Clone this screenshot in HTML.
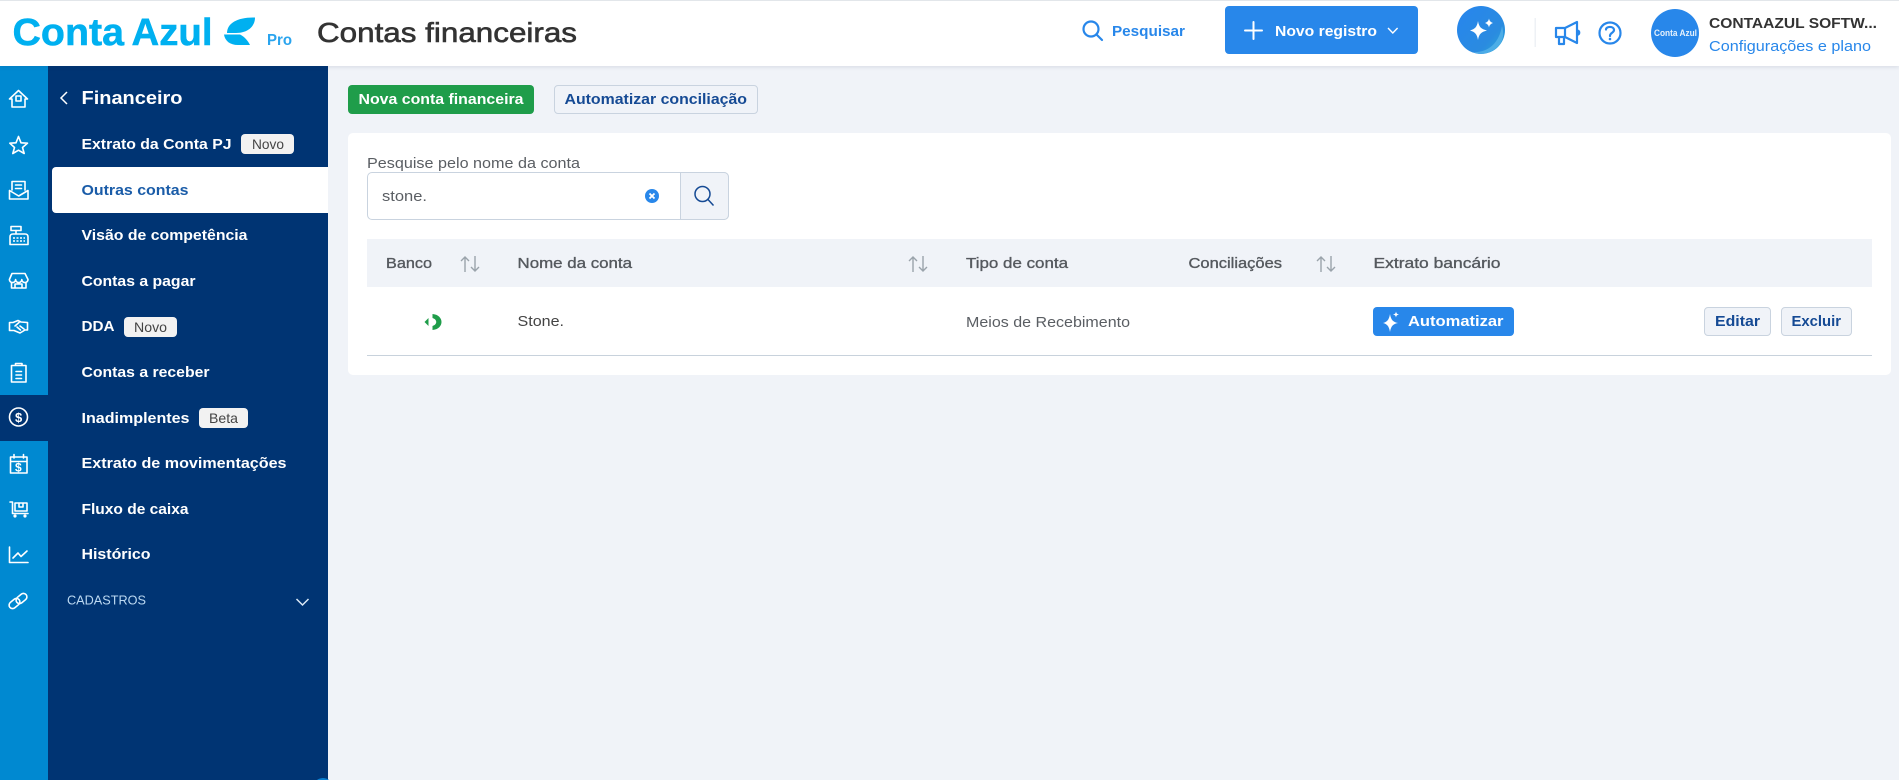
<!DOCTYPE html>
<html lang="pt-BR">
<head>
<meta charset="utf-8">
<title>Contas financeiras</title>
<style>
html,body{margin:0;padding:0;width:1899px;height:780px;overflow:hidden;background:#f0f3f8}
#p{position:relative;width:1899px;height:780px;overflow:hidden;background:#f0f3f8}
.b{position:absolute;box-sizing:border-box}
svg.o{position:absolute;left:0;top:0;width:1899px;height:780px}
text{font-family:"Liberation Sans",sans-serif;font-size:15px}
.m{font-weight:700;fill:#fff;font-size:15px}
.u{fill:#5a5e63;font-size:15px}
.h{fill:#55595e;font-size:15px;stroke:#55595e;stroke-width:.35}
.r{fill:none;stroke:#fff;stroke-width:1.6;stroke-linejoin:round;stroke-linecap:round}
.s{fill:none;stroke:#2887ea;stroke-width:2.2;stroke-linejoin:round;stroke-linecap:round}
.a{fill:none;stroke:#9aa3ab;stroke-width:1.4}
</style>
</head>
<body>
<div id="p">
<div class="b" style="left:0;top:0;width:1899px;height:66px;background:#fff;border-top:1px solid #e2e6ea;box-shadow:0 1px 4px rgba(30,50,80,.12);z-index:3"></div>
<div class="b" style="left:0;top:66px;width:48px;height:714px;background:#0089d1"></div>
<div class="b" style="left:48px;top:66px;width:280px;height:714px;background:#003473"></div>
<div class="b" style="left:0;top:395px;width:48px;height:46px;background:#003473"></div>
<div class="b" style="left:52px;top:167px;width:276px;height:46px;background:#fff;border-radius:4px 0 0 4px"></div>
<div class="b" style="left:241px;top:134px;width:53px;height:20px;background:#f2f2f2;border-radius:4px"></div>
<div class="b" style="left:124px;top:317px;width:53px;height:20px;background:#f2f2f2;border-radius:4px"></div>
<div class="b" style="left:199px;top:408px;width:49px;height:20px;background:#f2f2f2;border-radius:4px"></div>
<div class="b" style="left:313px;top:778px;width:20px;height:20px;background:#0a7fd0;border-radius:50%"></div>

<div class="b" style="left:348px;top:85px;width:186px;height:29px;background:#1f9d4a;border-radius:4px"></div>
<div class="b" style="left:554px;top:85px;width:204px;height:29px;background:#f0f3f8;border:1px solid #c9d3df;border-radius:4px"></div>
<div class="b" style="left:348px;top:133px;width:1543px;height:242px;background:#fff;border-radius:5px"></div>
<div class="b" style="left:367px;top:172px;width:362px;height:48px;background:#fff;border:1px solid #c9d3df;border-radius:5px"></div>
<div class="b" style="left:680px;top:172px;width:49px;height:48px;background:#f0f3f8;border:1px solid #c9d3df;border-radius:0 5px 5px 0"></div>
<div class="b" style="left:367px;top:239px;width:1505px;height:48px;background:#f0f3f8"></div>
<div class="b" style="left:367px;top:355px;width:1505px;height:1px;background:#c8d2dc"></div>
<div class="b" style="left:1373px;top:307px;width:141px;height:29px;background:#2887ea;border-radius:4px"></div>
<div class="b" style="left:1704px;top:307px;width:67px;height:29px;background:#f0f3f8;border:1px solid #c9d3df;border-radius:4px"></div>
<div class="b" style="left:1781px;top:307px;width:71px;height:29px;background:#f0f3f8;border:1px solid #c9d3df;border-radius:4px"></div>
<div class="b" style="left:1225px;top:6px;width:193px;height:48px;background:#2887ea;border-radius:4px;z-index:4"></div>

<svg class="o" style="z-index:5" viewBox="0 0 1899 780" xmlns="http://www.w3.org/2000/svg">
<defs>
<linearGradient id="g" x1="0.2" y1="0.2" x2="1" y2="0.9"><stop offset="0" stop-color="#2887ea"/><stop offset=".65" stop-color="#2a8be0"/><stop offset="1" stop-color="#28a8d8"/></linearGradient>
</defs>
<!-- logo -->
<text x="12.500" y="45" textLength="111.500" lengthAdjust="spacingAndGlyphs" style="font-size:38px;font-weight:700;fill:#00b0f0;stroke:#00b0f0;stroke-width:.5">Conta</text>
<text x="131.500" y="45" textLength="81" lengthAdjust="spacingAndGlyphs" style="font-size:38px;font-weight:700;fill:#00b0f0;stroke:#00b0f0;stroke-width:.5">Azul</text>
<path d="M227 33C227 23 238 17 255 17.500C255 27 247 33 236 33Z" fill="#00b0f0"/>
<path d="M224 34.500H240C245 37 248 41 250 45H238C230 45 225 41 224 34.500Z" fill="#00b0f0"/>
<text x="267" y="45" textLength="25" lengthAdjust="spacingAndGlyphs" style="font-size:16px;font-weight:700;fill:#2aa4ee">Pro</text>
<text x="317" y="42" textLength="260" lengthAdjust="spacingAndGlyphs" style="font-size:28px;fill:#333;stroke:#333;stroke-width:.6">Contas financeiras</text>

<!-- header right -->
<circle cx="1091" cy="29" r="7.500" class="s"/><path d="M1096.500 34.500L1102 40" class="s"/>
<text x="1112" y="36" textLength="73" lengthAdjust="spacingAndGlyphs" style="font-weight:700;fill:#2887ea">Pesquisar</text>
<path d="M1253.500 22v17M1245 30.500h17" style="fill:none;stroke:#fff;stroke-width:2;stroke-linecap:round"/>
<text x="1275" y="36" textLength="102" lengthAdjust="spacingAndGlyphs" style="font-weight:700;fill:#fff">Novo registro</text>
<path d="M1388 28l4.800 5 4.800-5" style="fill:none;stroke:#fff;stroke-width:1.400"/>
<circle cx="1481" cy="30" r="24" fill="url(#g)"/>
<path d="M1473 52C1487 53 1499 44 1502 26C1506 40 1499 49 1487 53C1482 54.500 1477 54 1473 52Z" fill="#58b4ea" opacity=".75"/>
<path d="M1478 21C1479 27 1481 29 1487 30.500C1481 32 1479 34 1478 40C1477 34 1475 32 1470 30.500C1475 29 1477 27 1478 21Z" fill="#fff"/>
<path d="M1489 18.500C1489.500 21 1490.500 22 1493 23C1490.500 24 1489.500 25 1489 27.500C1488.500 25 1487.500 24 1485 23C1487.500 22 1488.500 21 1489 18.500Z" fill="#fff"/>
<rect x="1534.500" y="18" width="1.500" height="29" fill="#eef1f5"/>
<path d="M1556 28H1565L1577 22V43L1565 37H1556ZM1565 28V37M1559 37V44H1564V37M1577 30.500C1580 31 1580 34 1577 35" class="s"/>
<circle cx="1610" cy="33" r="10.500" class="s"/>
<path d="M1606 29.500C1606 26 1614 26 1614 30C1614 33 1610 32.500 1610 36" class="s"/><circle cx="1610" cy="39" r="1.300" fill="#2887ea"/>
<circle cx="1675" cy="33" r="24" fill="#2887ea"/>
<text x="1654" y="36" textLength="43" lengthAdjust="spacingAndGlyphs" style="font-size:9px;font-weight:700;fill:#e6f1fc">Conta Azul</text>
<text x="1709" y="28" textLength="168" lengthAdjust="spacingAndGlyphs" style="font-size:14.500px;font-weight:700;fill:#333">CONTAAZUL SOFTW...</text>
<text x="1709" y="51" textLength="162" lengthAdjust="spacingAndGlyphs" style="fill:#2887ea;font-size:15px">Configurações e plano</text>

<!-- rail icons -->
<path class="r" d="M9.500 99L18.500 90.500L27.500 99H25V107H12V99Z"/><rect class="r" x="16" y="96" width="5" height="5"/>
<path class="r" d="M18.500 136.500L21 142.800L27.500 143.200L22.500 147.500L24.200 153.500L18.500 150.200L12.800 153.500L14.500 147.500L9.800 143.200L16 142.800Z"/>
<path class="r" d="M12 190V181.500H25V190M15.500 185h6M15.500 188.500h6M9.500 190.500V199H28V190.500L18.700 196Z"/>
<rect class="r" x="11" y="226.500" width="10" height="4"/><path class="r" d="M16 230.500V234M10 244.500V237Q10 234 13 234H25Q28 234 28 237V244.500Z"/><path d="M13 238h12M13 241h12" style="stroke:#fff;stroke-width:1.500;stroke-dasharray:2 1.500"/>
<path class="r" d="M12 273.500H25L28 279.500A3.100 3.100 0 0 1 21.800 279.500A3.100 3.100 0 0 1 15.600 279.500A3.100 3.100 0 0 1 9.400 279.500ZM11.500 283V288H26V283M15 288V284H22V288"/>
<path class="r" d="M9.500 322.500H13L18 320.500L21 322L27.500 322.500V330H25L20 333L14 330.500H9.500ZM15 326L19 322.500M17 327L20.500 330M20 326L24 329"/>
<path class="r" d="M11.500 365.500H26V382H11.500ZM15.500 365.500V363.500H22V365.500M16 371.500h5.500M16 375h5.500M16 378.500h5.500"/>
<circle class="r" cx="18.500" cy="417" r="9"/>
<text x="15" y="422" style="font-size:13px;font-weight:700;fill:#fff">$</text>
<path class="r" d="M10.500 457H27V473H10.500ZM10.500 461.500H27M14 454.500V458M23.500 454.500V458"/>
<text x="15" y="471.500" style="font-size:12px;font-weight:700;fill:#fff">$</text>
<path class="r" d="M10 502H12.500V513.500H28M15 503H27V511H15ZM19 503V507H23V503"/><circle class="r" cx="15" cy="516" r=".8"/><circle class="r" cx="25" cy="516" r=".8"/>
<path class="r" d="M9.500 547V562.500H28M13 558L18 553L21 556.500L27 551"/>
<rect class="r" x="8.500" y="600" width="12" height="7" rx="3.500" transform="rotate(-40 14.500 603.500)"/>
<rect class="r" x="15.500" y="595" width="12" height="7" rx="3.500" transform="rotate(-40 21.500 598.500)"/>

<!-- sidebar -->
<path d="M67 92l-6 6 6 6" style="fill:none;stroke:#fff;stroke-width:1.500"/>
<text x="81.500" y="104" textLength="101" lengthAdjust="spacingAndGlyphs" style="font-size:18.500px;font-weight:700;fill:#fff">Financeiro</text>
<text class="m" x="81.500" y="149" textLength="150" lengthAdjust="spacingAndGlyphs">Extrato da Conta PJ</text>
<text x="252" y="149" textLength="32" lengthAdjust="spacingAndGlyphs" style="font-size:14px;fill:#444">Novo</text>
<text class="m" x="81.500" y="195" textLength="107" lengthAdjust="spacingAndGlyphs" style="fill:#1a5ca8">Outras contas</text>
<text class="m" x="81.500" y="240" textLength="166" lengthAdjust="spacingAndGlyphs">Visão de competência</text>
<text class="m" x="81.500" y="286" textLength="114" lengthAdjust="spacingAndGlyphs">Contas a pagar</text>
<text class="m" x="81.500" y="331" textLength="33" lengthAdjust="spacingAndGlyphs">DDA</text>
<text x="134" y="332" textLength="33" lengthAdjust="spacingAndGlyphs" style="font-size:14px;fill:#444">Novo</text>
<text class="m" x="81.500" y="377" textLength="128" lengthAdjust="spacingAndGlyphs">Contas a receber</text>
<text class="m" x="81.500" y="423" textLength="108" lengthAdjust="spacingAndGlyphs">Inadimplentes</text>
<text x="209" y="423" textLength="29" lengthAdjust="spacingAndGlyphs" style="font-size:14px;fill:#444">Beta</text>
<text class="m" x="81.500" y="468" textLength="205" lengthAdjust="spacingAndGlyphs">Extrato de movimentações</text>
<text class="m" x="81.500" y="514" textLength="107" lengthAdjust="spacingAndGlyphs">Fluxo de caixa</text>
<text class="m" x="81.500" y="559" textLength="69" lengthAdjust="spacingAndGlyphs">Histórico</text>
<text x="67" y="604.500" textLength="79" lengthAdjust="spacingAndGlyphs" style="font-size:13px;fill:#bcd9f2">CADASTROS</text>
<path d="M296.500 599l6 6 6-6" style="fill:none;stroke:#dbe9f6;stroke-width:1.500"/>

<!-- actions -->
<text x="358.500" y="104" textLength="165" lengthAdjust="spacingAndGlyphs" style="font-weight:700;fill:#fff">Nova conta financeira</text>
<text x="564.500" y="104" textLength="182.500" lengthAdjust="spacingAndGlyphs" style="font-weight:700;fill:#154a94">Automatizar conciliação</text>

<!-- search -->
<text class="u" x="367" y="168" textLength="213" lengthAdjust="spacingAndGlyphs">Pesquise pelo nome da conta</text>
<text class="u" x="382" y="201" textLength="45" lengthAdjust="spacingAndGlyphs">stone.</text>
<circle cx="652" cy="196" r="7" fill="#2887ea"/><path d="M649.500 193.500l5 5M654.500 193.500l-5 5" style="stroke:#fff;stroke-width:1.800"/>
<circle cx="702.500" cy="194" r="7.500" style="fill:none;stroke:#154a94;stroke-width:1.500"/><path d="M708 199.500l5.500 6" style="stroke:#154a94;stroke-width:1.500"/>

<!-- table head -->
<text class="h" x="386" y="268" textLength="46" lengthAdjust="spacingAndGlyphs">Banco</text>
<text class="h" x="517.500" y="268" textLength="114.500" lengthAdjust="spacingAndGlyphs">Nome da conta</text>
<text class="h" x="966" y="268" textLength="102" lengthAdjust="spacingAndGlyphs">Tipo de conta</text>
<text class="h" x="1188.500" y="268" textLength="93.500" lengthAdjust="spacingAndGlyphs">Conciliações</text>
<text class="h" x="1373.500" y="268" textLength="127" lengthAdjust="spacingAndGlyphs">Extrato bancário</text>
<path class="a" d="M465 272V257M461 261l4-4 4 4M475 256V271M471 267l4 4 4-4"/>
<path class="a" d="M913 272V257M909 261l4-4 4 4M923 256V271M919 267l4 4 4-4"/>
<path class="a" d="M1321 272V257M1317 261l4-4 4 4M1331 256V271M1327 267l4 4 4-4"/>

<!-- row -->
<path d="M428.500 318L424.500 322L428.500 326Z" fill="#1f9d4a"/>
<path d="M432.500 314C444.500 315 444.500 329 432.500 330V326C437.500 324.500 437.500 319.500 432.500 318Z" fill="#1f9d4a"/>
<text x="517.500" y="326" textLength="46.500" lengthAdjust="spacingAndGlyphs" style="fill:#444;font-size:15px">Stone.</text>
<text class="u" x="966" y="327" textLength="164" lengthAdjust="spacingAndGlyphs">Meios de Recebimento</text>
<path d="M1390 314C1391 320 1393 322 1398 323C1393 324 1391 326 1390 332C1389 326 1387 324 1383 323C1387 322 1389 320 1390 314Z" fill="#fff"/>
<path d="M1396 311.500C1396.400 313.500 1397 314 1399 314.500C1397 315 1396.400 315.500 1396 317.500C1395.600 315.500 1395 315 1393 314.500C1395 314 1395.600 313.500 1396 311.500Z" fill="#fff"/>
<text x="1408" y="326" textLength="95.500" lengthAdjust="spacingAndGlyphs" style="font-weight:700;fill:#fff">Automatizar</text>
<text x="1715" y="326" textLength="45" lengthAdjust="spacingAndGlyphs" style="font-weight:700;fill:#154a94">Editar</text>
<text x="1791.500" y="326" textLength="49.500" lengthAdjust="spacingAndGlyphs" style="font-weight:700;fill:#154a94">Excluir</text>
</svg>
</div>
</body>
</html>
